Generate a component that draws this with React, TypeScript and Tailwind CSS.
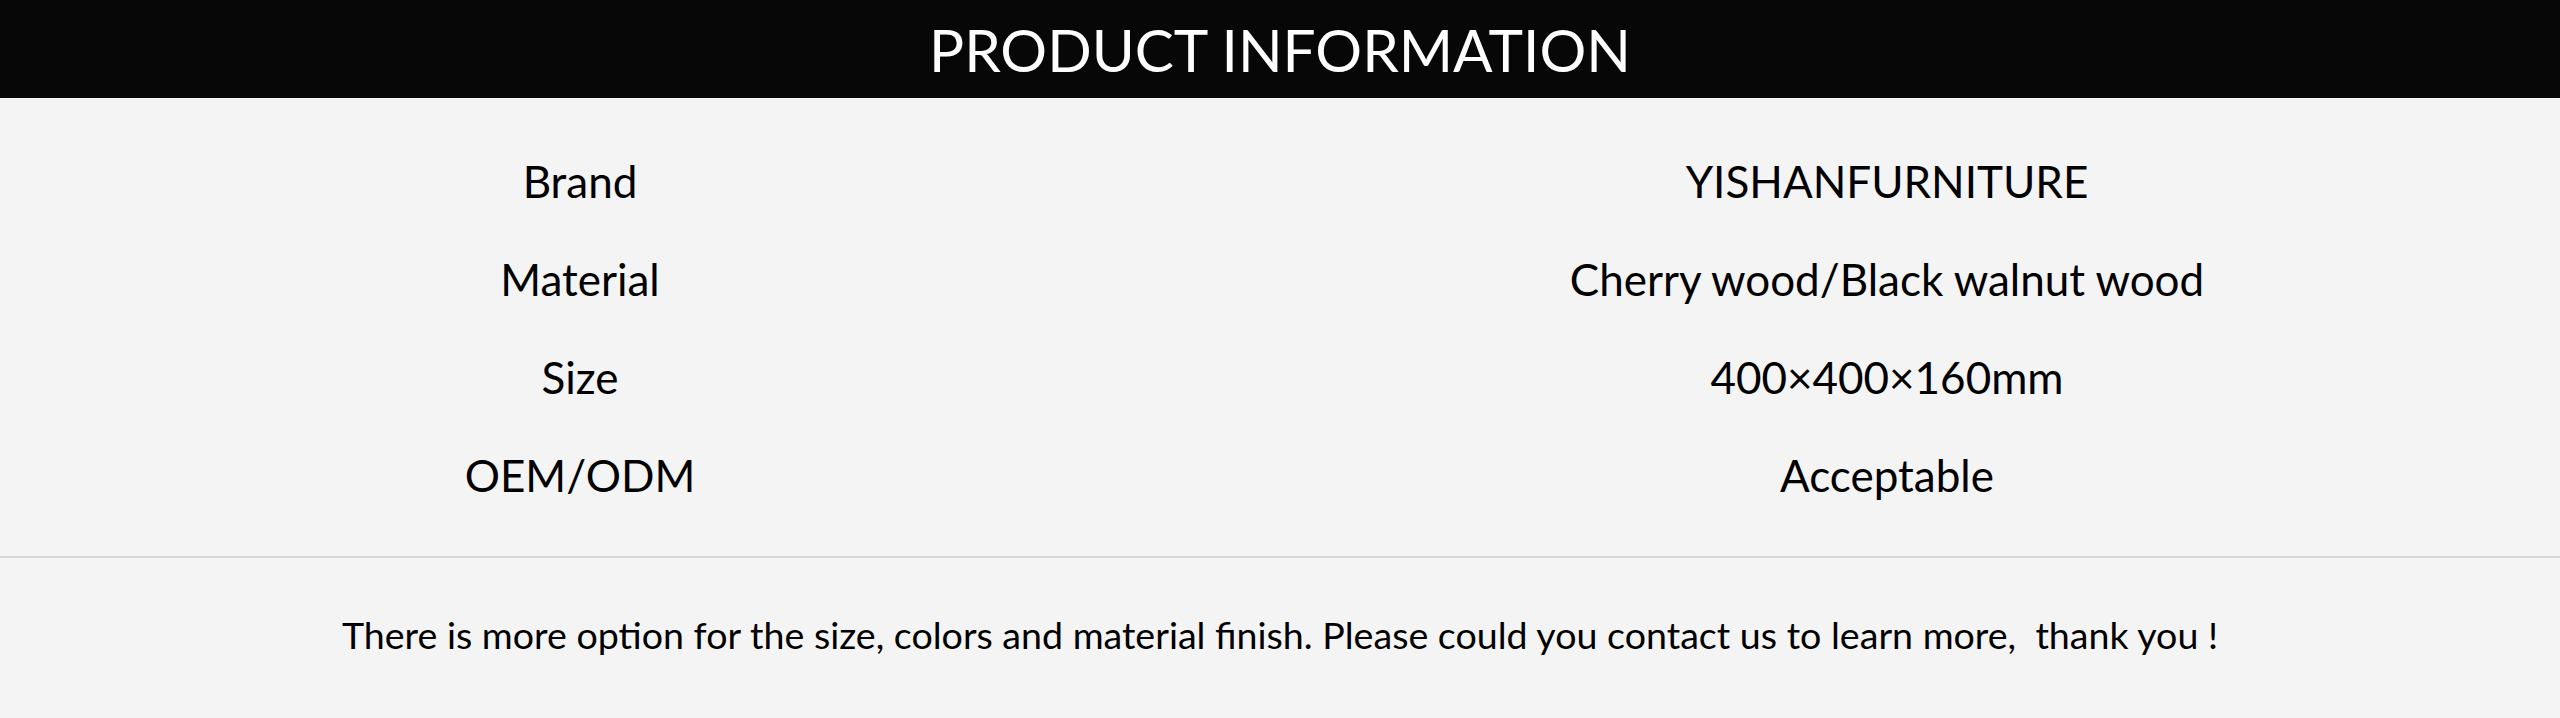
import React from "react";

const rows = [
  { label: "Brand", value: "YISHANFURNITURE" },
  { label: "Material", value: "Cherry wood/Black walnut wood" },
  { label: "Size", value: "400×400×160mm" },
  { label: "OEM/ODM", value: "Acceptable" },
];

const App = () => {
  return (
    <div className="w-full min-h-screen bg-[#f4f4f4] font-['Lato','Liberation_Sans',sans-serif] text-black">
      {/* 헤더 */}
      <div className="h-[98px] bg-[#070707] text-white text-center text-[58.5px] leading-[98px]">
        PRODUCT INFORMATION
      </div>

      {/* 제품 정보 표 */}
      <div className="pt-[34px] pb-[32px]">
        {rows.map((row) => (
          <div key={row.label} className="grid grid-cols-[1160px_1fr] text-[44px] leading-[98px]">
            <div className="text-center">{row.label}</div>
            <div className="text-center pl-[54px]">{row.value}</div>
          </div>
        ))}
      </div>

      <div className="h-[2px] bg-[#d6d6d6]" />

      {/* 하단 안내 */}
      <div className="pt-[54px] pb-[60px] text-center text-[37.6px] leading-[1.2]">
        There is more option for the size, colors and material finish. Please could you contact us to learn more,&nbsp; thank you !
      </div>
    </div>
  );
};

export default App;
